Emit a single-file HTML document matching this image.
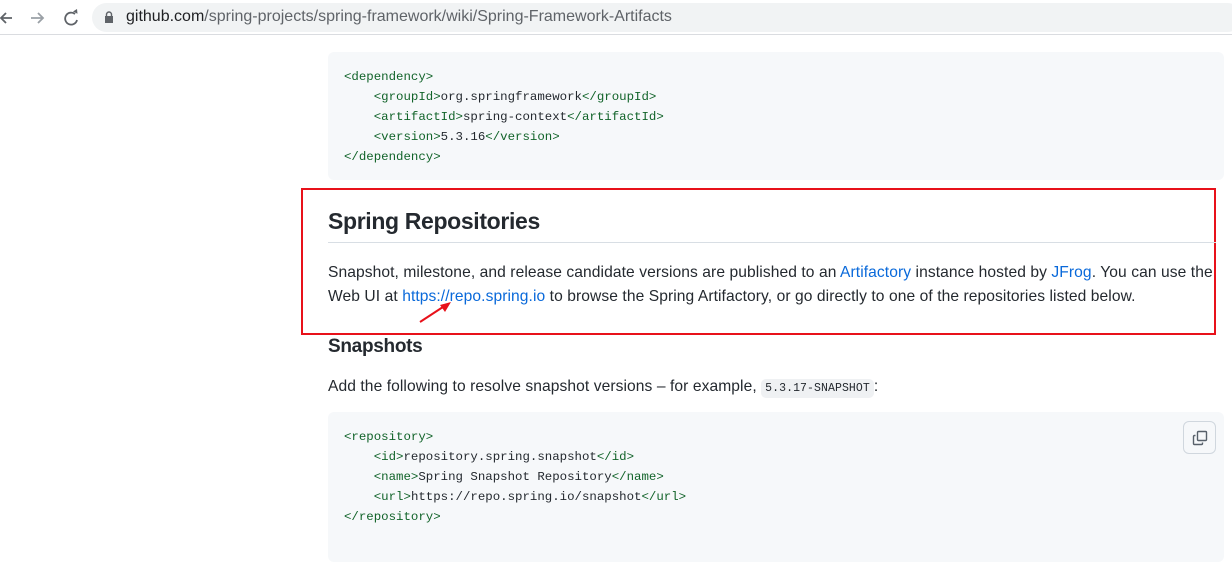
<!DOCTYPE html>
<html><head><style>
*{margin:0;padding:0;box-sizing:border-box}
body{width:1232px;height:556px;overflow:hidden;background:#fff;font-family:"Liberation Sans",Arial,sans-serif;color:#24292f;position:relative}
.abs{position:absolute;white-space:nowrap}
.bar{position:absolute;left:0;top:0;width:1232px;height:35px;background:#fff;border-bottom:1px solid #dadce0}
.url{position:absolute;left:92px;top:3px;width:1150px;height:29px;background:#f1f3f4;border-radius:15px}
.code{position:absolute;left:328px;width:896px;background:#f6f8fa;border-radius:6px}
.code pre{position:absolute;left:16px;font-family:"Liberation Mono",monospace;font-size:12.4px;line-height:20px;color:#24292f}
.t{color:#116329}
.p{font-size:15.6px;color:#24292f;letter-spacing:0.08px}
a{color:#0969da;text-decoration:none}
</style></head><body>
<div class="bar">
<svg class="abs" style="left:0;top:9px" width="90" height="18" viewBox="0 0 90 18">
<path d="M12 9H1M6 4L1 9l5 5" stroke="#5f6368" stroke-width="1.8" fill="none"/>
<path d="M31 9h12M38 4l5 5-5 5" stroke="#9aa0a6" stroke-width="1.8" fill="none"/>
<path d="M75 5a6 6 0 1 0 2 6" stroke="#5f6368" stroke-width="1.8" fill="none"/><path d="M73 2.5l4.5 2.3-.5-4.8z" fill="#5f6368"/>
</svg>
<div class="url"></div>
<svg class="abs" style="left:104px;top:11px" width="10" height="13"><rect x="1" y="5" width="8" height="7" fill="#5f6368"/><path d="M2.5 5V3.5a2.5 2.5 0 0 1 5 0V5" stroke="#5f6368" stroke-width="1.4" fill="none"/></svg>
<div class="abs" style="left:126px;top:8px;font-size:16px;color:#5f6368;letter-spacing:0px"><span style="color:#202124">github.com</span>/spring-projects/spring-framework/wiki/Spring-Framework-Artifacts</div>
</div>

<div class="code" style="top:52px;height:128px"><pre style="top:15px"><span class="t">&lt;dependency&gt;</span>
    <span class="t">&lt;groupId&gt;</span>org.springframework<span class="t">&lt;/groupId&gt;</span>
    <span class="t">&lt;artifactId&gt;</span>spring-context<span class="t">&lt;/artifactId&gt;</span>
    <span class="t">&lt;version&gt;</span>5.3.16<span class="t">&lt;/version&gt;</span>
<span class="t">&lt;/dependency&gt;</span></pre></div>

<div class="abs" style="left:301px;top:188px;width:915px;height:147px;border:2px solid #e8111a"></div>
<div class="abs" style="left:328px;top:208px;font-size:23px;font-weight:600;letter-spacing:-0.35px">Spring Repositories</div>
<div class="abs" style="left:328px;top:242px;width:888px;height:1px;background:#d8dee4"></div>
<div class="abs p" style="left:328px;top:264px">Snapshot, milestone, and release candidate versions are published to an <a>Artifactory</a> instance hosted by <a>JFrog</a>. You can use the</div>
<div class="abs p" style="left:328px;top:288px">Web UI at <a>https://repo.spring.io</a> to browse the Spring Artifactory, or go directly to one of the repositories listed below.</div>
<svg class="abs" style="left:418px;top:300px" width="34" height="24"><path d="M2 22L28 5" stroke="#e8111a" stroke-width="2"/><path d="M33 2l-11 3 5 7z" fill="#e8111a"/></svg>

<div class="abs" style="left:328px;top:336px;font-size:19px;font-weight:600;letter-spacing:-0.3px">Snapshots</div>
<div class="abs p" style="left:328px;top:378px">Add the following to resolve snapshot versions – for example, <span style="font-family:'Liberation Mono',monospace;font-size:11.5px;background:#eff1f3;padding:3px 4px;border-radius:5px">5.3.17-SNAPSHOT</span>:</div>

<div class="code" style="top:412px;height:150px"><pre style="top:15px"><span class="t">&lt;repository&gt;</span>
    <span class="t">&lt;id&gt;</span>repository.spring.snapshot<span class="t">&lt;/id&gt;</span>
    <span class="t">&lt;name&gt;</span>Spring Snapshot Repository<span class="t">&lt;/name&gt;</span>
    <span class="t">&lt;url&gt;</span>https://repo.spring.io/snapshot<span class="t">&lt;/url&gt;</span>
<span class="t">&lt;/repository&gt;</span></pre>
<div class="abs" style="left:855px;top:9px;width:33px;height:33px;border:1px solid #d0d7de;border-radius:6px;background:#f6f8fa">
<svg style="position:absolute;left:8px;top:8px" width="16" height="16" viewBox="0 0 16 16"><rect x="5.5" y="1.5" width="9" height="9" rx="1" stroke="#57606a" stroke-width="1.4" fill="none"/><path d="M3.5 5.5h-1a1 1 0 0 0-1 1v7a1 1 0 0 0 1 1h7a1 1 0 0 0 1-1v-1" stroke="#57606a" stroke-width="1.4" fill="none"/></svg>
</div></div>
</body></html>
